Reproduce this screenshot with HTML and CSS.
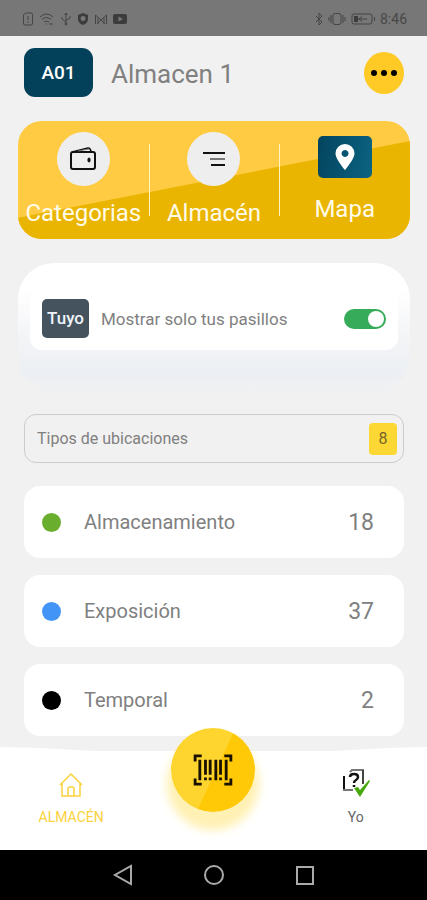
FILE: index.html
```
<!DOCTYPE html>
<html lang="es">

<head>
    <meta charset="UTF-8">
    <meta name="viewport" content="width=device-width, initial-scale=1.0">
    <title>Almacen 1</title>
    <link rel="stylesheet" href="styles.css">
</head>

<body>

<!-- Status bar -->
<div class="status-bar">
    <div class="status-icons">
        <svg width="12" height="14" viewBox="0 0 12 14"><path d="M3.500 1H9a1.500 1.500 0 0 1 1.500 1.500v9A1.500 1.500 0 0 1 9 13H3a1.500 1.500 0 0 1-1.500-1.500V3zM6 4v4M6 9.500v1.500"/></svg>
        <svg width="16" height="14" viewBox="0 0 16 14"><path d="M1 5q6.500-6 13 0M3 7.500q4.500-4 9 0M5 10q2.500-2 5 0M7 12h1M10 12h4"/></svg>
        <svg width="12" height="14" viewBox="0 0 12 14"><path d="M6 1v12M4.500 3L6 1l1.500 2M2 5v2l4 3M10 4v2L6 8.500"/><circle cx="6" cy="12" r="1"/></svg>
        <svg width="12" height="14" viewBox="0 0 12 14"><path class="solid" fill-rule="evenodd" d="M6 1l5 2v4q0 4-5 6Q1 11 1 7V3zM6 4a2.500 2.500 0 1 0 .1 0z"/></svg>
        <svg width="14" height="14" viewBox="0 0 14 14"><path d="M1.500 12V3L7 8l5.500-5v9M4 12V6M10 12V6M3 12l4-4 4 4"/></svg>
        <svg width="14" height="14" viewBox="0 0 14 14"><path class="solid" fill-rule="evenodd" d="M2 2h10q2 0 2 2v6q0 2-2 2H2q-2 0-2-2V4q0-2 2-2zM5.500 4.500v5L10 7z"/></svg>
    </div>
    <div class="status-icons status-right">
        <svg width="10" height="14" viewBox="0 0 10 14"><path d="M2 4l6 6-3 3V1l3 3-6 6"/></svg>
        <svg width="18" height="14" viewBox="0 0 18 14"><rect x="5" y="1.500" width="8" height="11" rx="2"/><path d="M3 3v8M1 5v4M15 3v8M17 5v4"/></svg>
        <svg width="26" height="14" viewBox="0 0 26 14"><rect x="2" y="2" width="20" height="10" rx="2"/><path d="M24.500 5v4M8 7h9M12 4.500L9 7l3 2.500"/><path class="solid" d="M4 4h4v6H4z"/></svg>
        <span>8:46</span>
    </div>
</div>

<main class="content">
    <header class="header">
        <span class="code">A01</span>
        <h1>Almacen 1</h1>
        <button type="button" class="more" aria-label="Más opciones">
            <svg width="28" height="8" viewBox="0 0 28 8"><circle cx="4" cy="4" r="3"/><circle cx="14" cy="4" r="3"/><circle cx="24" cy="4" r="3"/></svg>
        </button>
    </header>

    <!-- Main menu -->
    <nav class="menu">
        <a href="#categorias" class="menu-item">
            <span class="menu-icon">
                <svg width="28" height="26" viewBox="0 0 28 26" fill="none" stroke="#111" stroke-width="2"><rect x="2" y="6" width="24" height="17" rx="2"/><path d="M3 6l16-4q2-.5 3 3" stroke-width="1.500"/><path d="M9 5l11-2" stroke="#777" stroke-width="1"/><rect x="19" y="12" width="2" height="4" rx="1" fill="#111" stroke-width="1"/></svg>
            </span>
            Categorias
        </a>
        <a href="#almacen" class="menu-item">
            <span class="menu-icon">
                <svg width="22" height="16" viewBox="0 0 22 16" fill="none" stroke="#111" stroke-width="2"><path d="M0 2h22M8 14h14"/><path d="M7 8h15" stroke="#777"/></svg>
            </span>
            Almacén
        </a>
        <a href="#mapa" class="menu-item menu-item-map">
            <span class="map-icon">
                <svg width="20" height="26" viewBox="0 0 20 26"><path fill="#fff" fill-rule="evenodd" d="M10 0a9.500 9.500 0 0 1 9.500 9.500C19.500 15 10 26 10 26S.5 15 .5 9.500A9.500 9.500 0 0 1 10 0zM10 6a3.500 3.500 0 1 0 .1 0z"/></svg>
            </span>
            Mapa
        </a>
    </nav>

    <!-- Only own aisles -->
    <section class="own">
        <div class="own-row">
            <span class="own-tag">Tuyo</span>
            <label for="ownOnly">Mostrar solo tus pasillos</label>
            <input type="checkbox" id="ownOnly" class="switch" checked>
        </div>
    </section>

    <!-- Location types -->
    <div class="types">
        <h2>Tipos de ubicaciones</h2>
        <span class="types-count">8</span>
    </div>
    <ul class="list">
        <li>
            <span class="dot green"></span>
            <span class="name">Almacenamiento</span>
            <span class="count">18</span>
        </li>
        <li>
            <span class="dot blue"></span>
            <span class="name">Exposición</span>
            <span class="count">37</span>
        </li>
        <li>
            <span class="dot black"></span>
            <span class="name">Temporal</span>
            <span class="count">2</span>
        </li>
    </ul>
</main>

<!-- Bottom tabs -->
<nav class="tabs">
    <a href="#almacen" class="tab active">
        <svg width="26" height="26" viewBox="0 0 26 26" fill="none" stroke="#fbd23c" stroke-width="1.500"><path d="M2 13L13 2l11 11M4 11v13h18V11M10 24v-7q0-2 2-2h2q2 0 2 2v7"/></svg>
        ALMACÉN
    </a>
    <button type="button" class="scan" aria-label="Escanear">
        <svg width="40" height="32" viewBox="0 0 42 34" fill="none" stroke="#1a1200" stroke-width="3"><path d="M2 8V2h7M33 2h7v6M2 26v6h7M33 32h7v-6"/><path d="M7 6v22M13 6v16M13 25v3M18 6v16M18 25v3M24 6v22M29 6v16M29 25v3M35 6v22"/></svg>
    </button>
    <a href="#yo" class="tab">
        <svg width="28" height="30" viewBox="0 0 28 30" fill="none"><path d="M2 8v14" stroke="#111" stroke-width="2"/><path d="M1 22h10" stroke="#777" stroke-width="2"/><path d="M8 4l2-2h12" stroke="#777" stroke-width="2"/><path d="M21 2v14" stroke="#444" stroke-width="2"/><path d="M8 9q0-3 4-3t4 3q0 2-2 3t-2 3M12 17v2" stroke="#111" stroke-width="2.500"/><path fill="#45a80c" d="M12 20l4-1 2 3 9-10 1 1-10 16z"/></svg>
        Yo
    </a>
</nav>

<!-- System buttons -->
<div class="system-bar">
    <button type="button" aria-label="Atrás"><svg width="22" height="22" viewBox="0 0 22 22"><path d="M19 2v18L3 11z"/></svg></button>
    <button type="button" aria-label="Inicio"><svg width="22" height="22" viewBox="0 0 22 22"><circle cx="11" cy="11" r="9"/></svg></button>
    <button type="button" aria-label="Recientes"><svg width="22" height="22" viewBox="0 0 22 22"><rect x="3" y="3" width="16" height="17"/></svg></button>
</div>

</body>

</html>
```
FILE: styles.css
```
* {
    box-sizing: border-box;
}

body {
    margin: 0;
    min-height: 100vh;
    display: flex;
    flex-direction: column;
    background: #f1f1f1;
    color: #808080;
    font-family: Roboto, "Liberation Sans", sans-serif;
}

h1,
h2 {
    margin: 0;
    font-weight: 400;
}

button {
    border: none;
    padding: 0;
    cursor: pointer;
}

a {
    color: inherit;
    text-decoration: none;
}

svg {
    display: block;
}

/* Status bar */
.status-bar {
    height: 36px;
    padding: 2px 20px 0 22px;
    display: flex;
    align-items: center;
    justify-content: space-between;
    background: #777;
    color: #484848;
    font-size: 14px;
}

.status-icons {
    display: flex;
    align-items: center;
    gap: 5px;
}

.status-right {
    gap: 4px;
}

.status-icons svg {
    fill: none;
    stroke: #444;
}

.status-icons .solid {
    fill: #3c3c3c;
    stroke: none;
}

/* Header */
.content {
    padding: 12px 17px 0 18px;
}

.header {
    display: flex;
    align-items: center;
    padding: 0 6px;
}

.code {
    width: 69px;
    height: 49px;
    border-radius: 11px;
    background: #03415a;
    color: #fff;
    font-size: 19px;
    font-weight: 500;
    line-height: 49px;
    text-align: center;
}

h1 {
    flex: 1;
    margin-left: 18px;
    padding-top: 3px;
    font-size: 26px;
    line-height: 46px;
}

.more {
    width: 40px;
    height: 42px;
    border-radius: 50%;
    background: #ffc926;
    display: flex;
    align-items: center;
    justify-content: center;
}

/* Main menu */
.menu {
    position: relative;
    display: grid;
    grid-template-columns: repeat(3, 1fr);
    height: 118px;
    margin-top: 24px;
    border-radius: 24px;
    overflow: hidden;
    background: #ffcb42;
}

.menu::before {
    content: "";
    position: absolute;
    inset: 0;
    background: #eab500;
    clip-path: polygon(0 82%, 100% 17%, 100% 100%, 0 100%);
}

.menu-item {
    position: relative;
    display: flex;
    flex-direction: column;
    align-items: center;
    gap: 11px;
    padding-top: 11px;
    color: #fffbe8;
    font-size: 24px;
    line-height: 32px;
}

.menu-item + .menu-item::before {
    content: "";
    position: absolute;
    left: 0;
    top: 23px;
    width: 1px;
    height: 72px;
    background: #fff3c4;
}

.menu-icon {
    width: 53px;
    height: 54px;
    border-radius: 50%;
    background: #eee;
    display: flex;
    align-items: center;
    justify-content: center;
}

.menu-item-map {
    gap: 15px;
    padding-top: 15px;
}

.map-icon {
    width: 54px;
    height: 42px;
    border-radius: 5px;
    background: linear-gradient(100deg, #03445f, #0b6482);
    display: flex;
    align-items: center;
    justify-content: center;
}

/* Only own aisles */
.own {
    height: 130px;
    margin-top: 24px;
    padding: 24px 12px 0;
    border-radius: 36px;
    background: linear-gradient(#fff 20%, #f4f5f7 55%, #eceff3 85%, #f1f1f1);
}

.own-row {
    display: flex;
    align-items: center;
    height: 63px;
    padding: 0 12px;
    border-radius: 12px;
    background: #fff;
    font-size: 17px;
}

.own-tag {
    width: 47px;
    height: 39px;
    border-radius: 5px;
    background: #45535f;
    color: #eef4fa;
    font-weight: 500;
    line-height: 39px;
    text-align: center;
}

.own-row label {
    flex: 1;
    margin-left: 12px;
}

.switch {
    appearance: none;
    width: 42px;
    height: 20px;
    margin: 0;
    padding: 2px;
    border-radius: 10px;
    background: #aaa;
    display: flex;
}

.switch::before {
    content: "";
    width: 16px;
    height: 16px;
    border-radius: 50%;
    background: #fff;
}

.switch:checked {
    justify-content: flex-end;
    background: #36ab59;
}

/* Location types */
.types {
    display: flex;
    align-items: center;
    justify-content: space-between;
    height: 49px;
    margin: 21px 6px 0;
    padding: 0 6px 0 12px;
    border: 1px solid #ccc;
    border-radius: 12px;
}

h2 {
    font-size: 16px;
}

.types-count {
    width: 28px;
    height: 32px;
    border-radius: 4px;
    background: #fdd835;
    color: #75652a;
    font-size: 16px;
    line-height: 32px;
    text-align: center;
}

.list {
    display: flex;
    flex-direction: column;
    gap: 17px;
    margin: 23px 6px 14px;
    padding: 0;
    list-style: none;
}

.list li {
    display: flex;
    align-items: center;
    height: 72px;
    padding: 0 30px 0 18px;
    border-radius: 16px;
    background: #fff;
    font-size: 20px;
}

.name {
    flex: 1;
    margin-left: 23px;
}

.count {
    font-size: 23px;
}

.dot {
    width: 19px;
    height: 19px;
    border-radius: 50%;
}

.green {
    background: #6aae2d;
}

.blue {
    background: #4294f7;
}

.black {
    background: #000;
}

/* Bottom tabs */
.tabs {
    position: relative;
    display: grid;
    grid-template-columns: 1fr 1fr 1fr;
    height: 99px;
    margin-top: auto;
    background: #fff;
}

/* raised outer corners of the bar */
.tabs::before {
    content: "";
    position: absolute;
    top: -4px;
    left: 0;
    right: 0;
    height: 4px;
    background: #fff;
    clip-path: polygon(0 0, 8% 20%, 22% 100%, 78% 100%, 92% 20%, 100% 0, 100% 100%, 0 100%);
}

.tab {
    display: flex;
    flex-direction: column;
    align-items: center;
    justify-content: flex-end;
    gap: 10px;
    padding-bottom: 24px;
    font-size: 14px;
    line-height: 18px;
    color: #666;
}

.active {
    color: #fbd23c;
}

.scan {
    position: relative;
    justify-self: center;
    width: 84px;
    height: 84px;
    margin-top: -23px;
    border-radius: 50%;
    background: linear-gradient(115deg, #fed42f 52%, #ffc907 53%);
    box-shadow: 0 14px 10px 4px #fff1b3;
    display: flex;
    align-items: center;
    justify-content: center;
}

/* System buttons */
.system-bar {
    display: flex;
    align-items: center;
    justify-content: center;
    gap: 69px;
    height: 50px;
    background: #000;
}

.system-bar button {
    background: none;
}

.system-bar svg {
    fill: none;
    stroke: #aaa;
    stroke-width: 2;
}
```
